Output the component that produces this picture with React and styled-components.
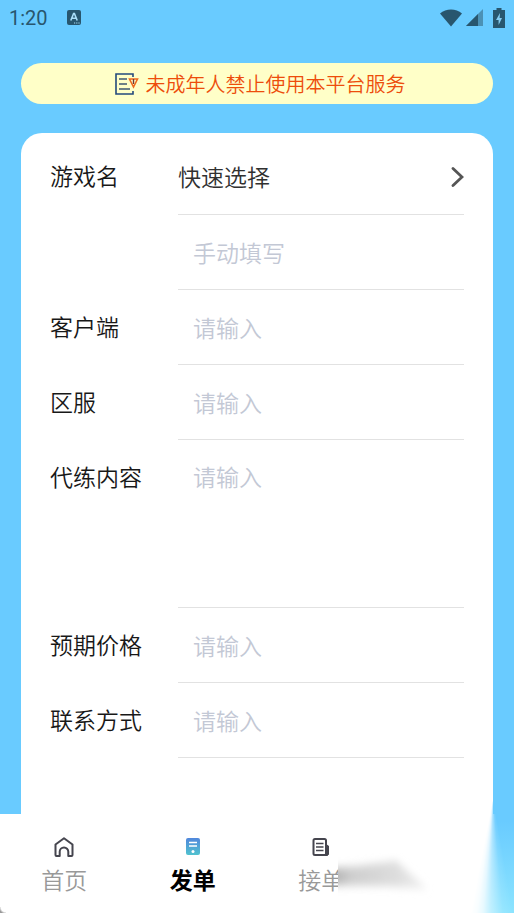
import React, { useState } from 'react';
import styled, { createGlobalStyle } from 'styled-components';

const FIELDS = [
  { name: 'game', label: '', placeholder: '手动填写', title: '手动填写游戏名' },
  { name: 'client', label: '客户端', placeholder: '请输入' },
  { name: 'server', label: '区服', placeholder: '请输入' },
  { name: 'content', label: '代练内容', placeholder: '请输入', multiline: true },
  { name: 'price', label: '预期价格', placeholder: '请输入' },
  { name: 'contact', label: '联系方式', placeholder: '请输入' },
];

function StatusBar() {
  return (
    <Status>
      <span>1:20</span>
      <svg width="14" height="15" viewBox="0 0 14 15">
        <rect width="14" height="15" rx="2" fill="#28566e" />
        <path d="M3.8 10.5 6.6 3.5h.8l2.8 7M4.8 8.3h4.4" fill="none" stroke="#a9def8" strokeWidth="1.6" />
        <path d="M7 13h1.2M9.2 13h1.2M11.4 13h1.2" stroke="#a9def8" strokeWidth="1" />
      </svg>
      <StatusIcons>
        <svg width="22" height="18" viewBox="0 0 22 18">
          <path d="M0 4.5C6-1 16-1 22 4.5L11 17.5z" fill="#28566e" />
        </svg>
        <svg width="17" height="17" viewBox="0 0 17 17">
          <path d="M0 17 17 0v17z" fill="#4b91b5" />
          <path d="M0 17 12 5v12z" fill="#28566e" />
        </svg>
        <svg width="12" height="20" viewBox="0 0 12 20">
          <path d="M3.5 0h5v2H12v18H0V2h3.5z" fill="#28566e" />
          <path d="M7 5 3 12h2.6v5L9 10H6.6z" fill="#86cdf2" />
        </svg>
      </StatusIcons>
    </Status>
  );
}

function NoticeIcon() {
  return (
    <svg width="24" height="22" viewBox="0 0 24 22" fill="none">
      <path d="M18 4V1H1v20h17v-3" stroke="#234a7c" strokeWidth="1.6" />
      <path d="M4 6h8M4 11h8M4 16h11" stroke="#3f5870" strokeWidth="1.6" />
      <path d="M14.5 6h8l-4 8z" stroke="#ee6a1f" strokeWidth="1.6" />
      <path d="M18.5 6v5" stroke="#6b3a38" strokeWidth="1.4" />
    </svg>
  );
}

function HomeIcon() {
  return (
    <svg width="22" height="22" viewBox="0 0 22 22" fill="none">
      <path
        d="M2.5 8.5 11 2.2l8.5 6.3V19a1 1 0 0 1-1 1h-3.2v-4.2a4.3 4.3 0 0 0-8.6 0V20H3.500a1 1 0 0 1-1-1z"
        stroke="#45454e"
        strokeWidth="2"
        strokeLinejoin="round"
      />
    </svg>
  );
}

function PublishIcon() {
  return (
    <svg width="22" height="22" viewBox="0 0 22 22">
      <defs>
        <linearGradient id="publish" x1="0" y1="0" x2="0" y2="1">
          <stop offset="0" stopColor="#5187dc" />
          <stop offset="1" stopColor="#50c2cf" />
        </linearGradient>
      </defs>
      <rect x="4" y="2" width="14" height="17" rx="2" fill="url(#publish)" />
      <path d="M7 6.5h8M7 10h8" stroke="#fff" strokeWidth="1.4" />
      <circle cx="11" cy="15.5" r="1.5" fill="#fff" />
    </svg>
  );
}

function OrderIcon() {
  return (
    <svg width="22" height="22" viewBox="0 0 22 22" fill="none">
      <path d="M16 8.5 18.5 10v8.5l-1 1H15z" fill="#45454e" stroke="#45454e" strokeLinejoin="round" />
      <rect x="3.5" y="3" width="12.5" height="16" rx="1.5" fill="#fff" stroke="#45454e" strokeWidth="2" />
      <path d="M6 7.5h7.5M6 11h7.5M6 14.5h7.5" stroke="#45454e" strokeWidth="1.4" />
    </svg>
  );
}

function App() {
  const [values, setValues] = useState({});
  const handleChange = (e) => {
    setValues({ ...values, [e.target.name]: e.target.value });
  };
  return (
    <Page>
      <GlobalStyle />
      <StatusBar />
      <Notice>
        <NoticeIcon />
        未成年人禁止使用本平台服务
      </Notice>
      <Form onSubmit={(e) => e.preventDefault()}>
        <Row>
          <Label id="pick-label" htmlFor="pick">
            游戏名
          </Label>
          <PickButton id="pick" type="button" aria-labelledby="pick-label pick">
            快速选择
            <svg width="13" height="22" viewBox="0 0 13 22" fill="none">
              <path d="M2 2.5 11 11l-9 8.5" stroke="#555" strokeWidth="2.8" strokeLinecap="round" />
            </svg>
          </PickButton>
        </Row>
        {FIELDS.map((field) => (
          <Row key={field.name}>
            <Label htmlFor={field.name}>{field.label}</Label>
            <Field
              as={field.multiline ? 'textarea' : 'input'}
              id={field.name}
              name={field.name}
              aria-label={field.title}
              placeholder={field.placeholder}
              $tall={field.multiline}
              value={values[field.name] || ''}
              onChange={handleChange}
            />
          </Row>
        ))}
      </Form>
      <TabBar>
        <Tab href="#home">
          <HomeIcon />
          首页
        </Tab>
        <Tab href="#publish" $active>
          <PublishIcon />
          发单
        </Tab>
        <Tab href="#orders">
          <OrderIcon />
          接单
        </Tab>
        <TabShade>
          <svg width="100" height="48" viewBox="0 0 100 48">
            <defs>
              <linearGradient id="shade" x1="0" y1="0" x2="1" y2="0">
                <stop offset="0" stopColor="#a6a6a6" />
                <stop offset="0.25" stopColor="#cecece" />
                <stop offset="0.7" stopColor="#dedede" />
                <stop offset="1" stopColor="#f2f2f2" />
              </linearGradient>
              <filter id="soft" x="-20%" y="-50%" width="140%" height="200%">
                <feGaussianBlur stdDeviation="3 4" />
              </filter>
            </defs>
            <rect width="100" height="48" fill="#fff" />
            <path d="M-12 16 20 13 58 8 90 36 50 33-12 32z" fill="url(#shade)" filter="url(#soft)" />
          </svg>
        </TabShade>
        <Glow />
      </TabBar>
      <Corner />
    </Page>
  );
}

const GlobalStyle = createGlobalStyle`
  * {
    box-sizing: border-box;
  }
  body {
    margin: 0;
    background: #69cbff;
    font-family: 'Noto Sans CJK SC', sans-serif;
    font-weight: 350;
  }
  svg {
    display: block;
    flex-shrink: 0;
  }
`;

const Page = styled.div`
  position: relative;
  min-height: 100vh;
  display: flex;
  flex-direction: column;
`;

const Status = styled.header`
  height: 35px;
  padding: 0 9px;
  display: flex;
  align-items: center;
  gap: 19px;
  font-family: Roboto, sans-serif;
  font-size: 20px;
  font-weight: 400;
  color: #28566e;
`;

const StatusIcons = styled.div`
  margin-left: auto;
  display: flex;
  align-items: center;
  gap: 4px;
  svg:last-child {
    margin-left: 6px;
  }
`;

const Notice = styled.p`
  height: 41px;
  margin: 28px 21px 29px;
  padding-left: 6px;
  display: flex;
  align-items: center;
  justify-content: center;
  gap: 7px;
  border-radius: 21px;
  background: #ffffc8;
  font-size: 20px;
  line-height: 24px;
  color: #ed4d0b;
`;

const Form = styled.form`
  flex: 1;
  margin: 0 21px;
  padding: 6px 29px 0;
  border-radius: 21px 21px 0 0;
  background: #fff;
`;

const Row = styled.div`
  display: grid;
  grid-template-columns: 128px 1fr;
  font-size: 23px;
  line-height: 33px;
`;

const Label = styled.label`
  padding-top: 20px;
  color: #181818;
`;

const PickButton = styled.button`
  height: 76px;
  padding: 0;
  display: flex;
  align-items: center;
  justify-content: space-between;
  border: 0;
  border-bottom: 1px solid #e2e2e2;
  background: none;
  font: inherit;
  color: #303030;
  cursor: pointer;
`;

const Field = styled.input`
  display: block;
  width: 100%;
  height: ${(props) => (props.$tall ? '168px' : '75px')};
  padding: 20px 15px 21px;
  border: 0;
  border-bottom: 1px solid #e2e2e2;
  border-radius: 0;
  outline: none;
  resize: none;
  background: none;
  font: inherit;
  color: #303030;
  &::placeholder {
    color: #c3c8d5;
    opacity: 1;
  }
`;

const TabBar = styled.nav`
  position: relative;
  height: 99px;
  display: grid;
  grid-template-columns: repeat(4, 1fr);
  background: #fff;
`;

const Tab = styled.a`
  padding-top: 22px;
  display: flex;
  flex-direction: column;
  align-items: center;
  gap: 8px;
  font-size: 23px;
  line-height: 27px;
  font-weight: ${(props) => (props.$active ? 700 : 350)};
  color: ${(props) => (props.$active ? '#000' : '#999')};
  text-decoration: none;
`;

/* soft shadow lying over the end of the third tab */
const TabShade = styled.div`
  position: absolute;
  right: 76px;
  bottom: 12px;
`;

/* light spreading from the card's lower right corner */
const Glow = styled.div`
  position: absolute;
  right: 0;
  bottom: 0;
  width: 44px;
  height: 115px;
  background: linear-gradient(#69cbff 20%, #8ce4ff);
  mask-image: conic-gradient(
    at 23px 0,
    #000 170deg,
    rgba(0, 0, 0, 0.9) 175deg,
    rgba(0, 0, 0, 0.55) 181deg,
    rgba(0, 0, 0, 0.2) 185deg,
    rgba(0, 0, 0, 0.06) 188deg,
    transparent 191deg
  );
`;

/* rounded corner of the screen */
const Corner = styled.div`
  position: absolute;
  left: 0;
  bottom: 0;
  width: 6px;
  height: 6px;
  background: radial-gradient(circle at 100% 0, transparent 5px, #999 7px);
`;

export default App;
